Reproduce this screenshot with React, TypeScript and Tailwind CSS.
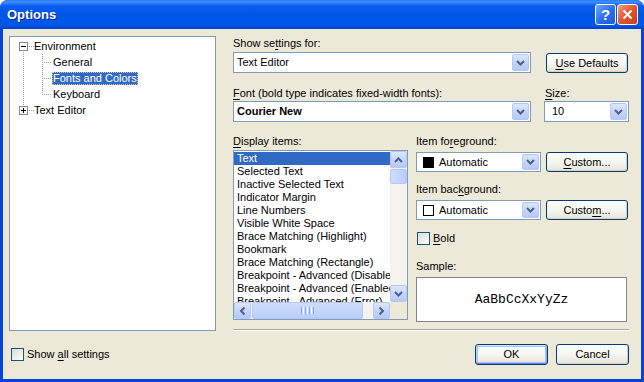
import React from "react";

const displayItems = [
  "Text",
  "Selected Text",
  "Inactive Selected Text",
  "Indicator Margin",
  "Line Numbers",
  "Visible White Space",
  "Brace Matching (Highlight)",
  "Bookmark",
  "Brace Matching (Rectangle)",
  "Breakpoint - Advanced (Disabled)",
  "Breakpoint - Advanced (Enabled)",
  "Breakpoint - Advanced (Error)",
  "Breakpoint - Advanced (Warning)",
];

function U({ children }: { children: React.ReactNode }) {
  return <span className="underline underline-offset-[2px]">{children}</span>;
}

function Chevron({ className = "" }: { className?: string }) {
  return (
    <svg width="9" height="6" viewBox="0 0 9 6" className={className}>
      <path d="M1 1 L4.5 4.5 L8 1" fill="none" stroke="#4D6185" strokeWidth="2" />
    </svg>
  );
}

function BlueBtn({ dir = "down", className = "" }: { dir?: string; className?: string }) {
  const rot =
    dir === "up" ? "rotate-180" : dir === "left" ? "rotate-90" : dir === "right" ? "-rotate-90" : "";
  return (
    <div
      className={`flex shrink-0 items-center justify-center rounded-[2px] border border-[#B6C9F5] bg-[linear-gradient(180deg,#DCE6FD_0%,#C5D5FB_50%,#B5C8F6_100%)] ${className}`}
    >
      <Chevron className={rot} />
    </div>
  );
}

function Combo({
  className,
  children,
}: {
  className: string;
  children: React.ReactNode;
}) {
  return (
    <div className={`flex shrink-0 border border-[#7F9DB9] bg-white p-[1px] ${className}`}>
      <div className="flex flex-1 items-center overflow-hidden whitespace-nowrap">{children}</div>
      <BlueBtn className="h-full w-[17px]" />
    </div>
  );
}

function XpButton({
  className,
  isDefault = false,
  children,
}: {
  className: string;
  isDefault?: boolean;
  children: React.ReactNode;
}) {
  return (
    <div
      className={`flex shrink-0 items-center justify-center rounded-[3px] border border-[#003C74] bg-[linear-gradient(180deg,#FFFFFF_0%,#F5F4EF_55%,#E6E3D6_100%)] text-black ${
        isDefault
          ? "shadow-[inset_0_1px_0_#CEE7FF,inset_0_-1px_0_#6982EE,inset_1px_0_0_#BCD4F6,inset_-1px_0_0_#89ADE4,inset_0_0_0_2px_#A8C2F2]"
          : "shadow-[inset_-1px_-1px_0_#D6D0C5]"
      } ${className}`}
    >
      {children}
    </div>
  );
}

function Checkbox() {
  return (
    <div className="h-[13px] w-[13px] shrink-0 border border-[#1C5180] bg-[linear-gradient(135deg,#DCDCD7_0%,#F4F4F0_70%,#FFFFFF_100%)]" />
  );
}

function TreeGutter({ kind }: { kind: "open" | "closed" | "child" | "lastChild" }) {
  const dots = { stroke: "#A0A0A0", strokeDasharray: "1 1", strokeWidth: 1 };
  if (kind === "child" || kind === "lastChild") {
    return (
      <svg width="42" height="16" shapeRendering="crispEdges" className="shrink-0">
        <line x1="13.5" y1="0" x2="13.5" y2="16" {...dots} />
        <line x1="32.5" y1="0" x2="32.5" y2={kind === "child" ? 16 : 9} {...dots} />
        <line x1="34" y1="8.5" x2="42" y2="8.5" {...dots} />
      </svg>
    );
  }
  return (
    <svg width="24" height="16" shapeRendering="crispEdges" className="shrink-0">
      {kind === "open" ? (
        <line x1="13.5" y1="14" x2="13.5" y2="16" {...dots} />
      ) : (
        <line x1="13.5" y1="0" x2="13.5" y2="4" {...dots} />
      )}
      <line x1="19" y1="8.5" x2="24" y2="8.5" {...dots} />
      <rect x="9.5" y="4.5" width="8" height="8" fill="#fff" stroke="#8A8A8A" />
      <line x1="11" y1="8.5" x2="16" y2="8.5" stroke="#000" />
      {kind === "closed" && <line x1="13.5" y1="6" x2="13.5" y2="11" stroke="#000" />}
    </svg>
  );
}

function Tree() {
  return (
    <div className="h-[295px] w-[207px] shrink-0 border border-[#7F9DB9] bg-white pt-[1px]">
      <div className="flex h-[16px] items-center">
        <TreeGutter kind="open" />
        <span>Environment</span>
      </div>
      <div className="flex h-[16px] items-center">
        <TreeGutter kind="child" />
        <span className="px-[1px]">General</span>
      </div>
      <div className="flex h-[16px] items-center">
        <TreeGutter kind="child" />
        <span className="border border-dotted border-[#D9C98E] bg-[#316AC5] leading-[11px] text-white">
          Fonts and Colors
        </span>
      </div>
      <div className="flex h-[16px] items-center">
        <TreeGutter kind="lastChild" />
        <span className="px-[1px]">Keyboard</span>
      </div>
      <div className="flex h-[16px] items-center">
        <TreeGutter kind="closed" />
        <span>Text Editor</span>
      </div>
    </div>
  );
}

function DisplayList() {
  return (
    <div className="flex h-[170px] w-[175px] flex-col border border-[#7F9DB9] bg-white">
      <div className="flex h-[151px]">
        <div className="w-[156px] overflow-hidden pt-[1px]">
          {displayItems.map((item, index) => (
            <div
              key={item}
              className={`h-[13px] whitespace-nowrap pl-[3px] leading-[13px] ${
                index === 0 ? "bg-[#316AC5] text-white" : ""
              }`}
            >
              {item}
            </div>
          ))}
        </div>
        <div className="flex w-[17px] flex-col bg-[#F4F3EE]">
          <BlueBtn dir="up" className="h-[17px] w-[17px]" />
          <div className="mt-[1px] h-[15px] rounded-[2px] border border-[#B6C9F5] bg-[linear-gradient(90deg,#D0DCFC_0%,#C3D3FB_60%,#B9CBF7_100%)]" />
          <div className="flex-1" />
          <BlueBtn dir="down" className="h-[17px] w-[17px]" />
        </div>
      </div>
      <div className="flex h-[17px]">
        <div className="flex w-[156px] bg-[#F4F3EE]">
          <BlueBtn dir="left" className="h-[17px] w-[17px]" />
          <div className="ml-[1px] flex w-[111px] items-center justify-center gap-[1px] rounded-[2px] border border-[#B6C9F5] bg-[linear-gradient(180deg,#D0DCFC_0%,#C3D3FB_60%,#B9CBF7_100%)]">
            <span className="h-[7px] w-[1px] bg-[#8DA6E6]" />
            <span className="h-[7px] w-[1px] bg-white" />
            <span className="h-[7px] w-[1px] bg-[#8DA6E6]" />
            <span className="h-[7px] w-[1px] bg-white" />
            <span className="h-[7px] w-[1px] bg-[#8DA6E6]" />
            <span className="h-[7px] w-[1px] bg-white" />
            <span className="h-[7px] w-[1px] bg-[#8DA6E6]" />
          </div>
          <div className="flex-1" />
          <BlueBtn dir="right" className="h-[17px] w-[17px]" />
        </div>
        <div className="w-[17px] bg-[#ECE9D8]" />
      </div>
    </div>
  );
}

export default function App() {
  return (
    <div className="h-[382px] w-[644px] bg-white font-['Liberation_Sans',Arial,sans-serif] text-[11px] leading-[13px] text-black">
      <div className="flex h-full flex-col overflow-hidden rounded-t-[8px] bg-[#0843D9]">
        {/* title bar */}
        <div className="flex h-[29px] shrink-0 items-center bg-[linear-gradient(180deg,#2C7BFB_0%,#3D8DFF_7%,#0A5DF2_20%,#0055E5_50%,#0058EC_85%,#0043CC_100%)] pl-[7px] pr-[6px]">
          <span className="text-[13px] font-bold text-white [text-shadow:1px_1px_0_#0B2A8A]">Options</span>
          <div className="ml-auto flex gap-[1px]">
            <div className="flex h-[21px] w-[21px] items-center justify-center rounded-[3px] border border-white bg-[linear-gradient(135deg,#6FA4FF_0%,#2A6DF0_55%,#1F55D8_100%)] text-[15px] font-bold leading-none text-white">
              ?
            </div>
            <div className="flex h-[21px] w-[21px] items-center justify-center rounded-[3px] border border-white bg-[linear-gradient(135deg,#F0A08A_0%,#E2552E_50%,#C83D1C_100%)]">
              <svg width="11" height="11" viewBox="0 0 11 11">
                <path d="M1.5 1.5 L9.5 9.5 M9.5 1.5 L1.5 9.5" stroke="#fff" strokeWidth="2" />
              </svg>
            </div>
          </div>
        </div>

        {/* dialog body */}
        <div className="mx-[3px] mb-[3px] flex flex-1 flex-col bg-[#ECE9D8] pl-[6px] pr-[12px] pt-[7px]">
          <div className="flex h-[295px]">
            <Tree />

            <div className="ml-[17px] flex w-[396px] flex-col">
              <div className="mt-[1px]">
                Show se<U>t</U>tings for:
              </div>
              <div className="mt-[2px] flex">
                <Combo className="h-[21px] w-[298px]">
                  <span className="pl-[2px]">Text Editor</span>
                </Combo>
                <XpButton className="ml-[15px] mt-[1px] h-[20px] w-[82px]">
                  <U>U</U>se Defaults
                </XpButton>
              </div>

              <div className="mt-[14px] flex">
                <div className="w-[312px]">
                  <U>F</U>ont (bold type indicates fixed-width fonts):
                </div>
                <div>
                  <U>S</U>ize:
                </div>
              </div>
              <div className="mt-[1px] flex">
                <Combo className="h-[21px] w-[298px]">
                  <span className="pl-[2px] font-bold">Courier New</span>
                </Combo>
                <Combo className="ml-[13px] h-[21px] w-[85px]">
                  <span className="pl-[6px]">10</span>
                </Combo>
              </div>

              <div className="mt-[13px] flex">
                <div className="flex w-[183px] flex-col">
                  <div>
                    <U>D</U>isplay items:
                  </div>
                  <div className="mt-[2px]">
                    <DisplayList />
                  </div>
                </div>

                <div className="flex flex-col">
                  <div>
                    Item fo<U>r</U>eground:
                  </div>
                  <div className="mt-[4px] flex">
                    <Combo className="h-[20px] w-[125px]">
                      <span className="ml-[5px] h-[11px] w-[11px] bg-black" />
                      <span className="ml-[5px]">Automatic</span>
                    </Combo>
                    <XpButton className="ml-[5px] h-[20px] w-[82px]">
                      <U>C</U>ustom...
                    </XpButton>
                  </div>

                  <div className="mt-[11px]">
                    Item bac<U>k</U>ground:
                  </div>
                  <div className="mt-[4px] flex">
                    <Combo className="h-[20px] w-[125px]">
                      <span className="ml-[5px] h-[11px] w-[11px] border border-black bg-white" />
                      <span className="ml-[5px]">Automatic</span>
                    </Combo>
                    <XpButton className="ml-[5px] h-[20px] w-[82px]">
                      Custo<U>m</U>...
                    </XpButton>
                  </div>

                  <div className="ml-[1px] mt-[12px] flex h-[13px] items-center">
                    <Checkbox />
                    <span className="ml-[3px]">
                      <U>B</U>old
                    </span>
                  </div>

                  <div className="mt-[15px]">Sample:</div>
                  <div className="mt-[4px] flex h-[45px] w-[211px] items-center justify-center border border-[#858585] bg-white font-['Liberation_Mono',monospace] text-[13px]">
                    AaBbCcXxYyZz
                  </div>
                </div>
              </div>

              <div className="mt-auto h-[2px] border-b border-t border-b-white border-t-[#ACA899]" />
            </div>
          </div>

          <div className="mt-[13px] flex h-[21px] items-center">
            <div className="ml-[2px] flex items-center">
              <Checkbox />
              <span className="ml-[3px]">
                Show <U>a</U>ll settings
              </span>
            </div>
            <div className="ml-auto flex gap-[8px]">
              <XpButton isDefault className="h-[21px] w-[73px]">
                OK
              </XpButton>
              <XpButton className="h-[21px] w-[73px]">Cancel</XpButton>
            </div>
          </div>
        </div>
      </div>
    </div>
  );
}
